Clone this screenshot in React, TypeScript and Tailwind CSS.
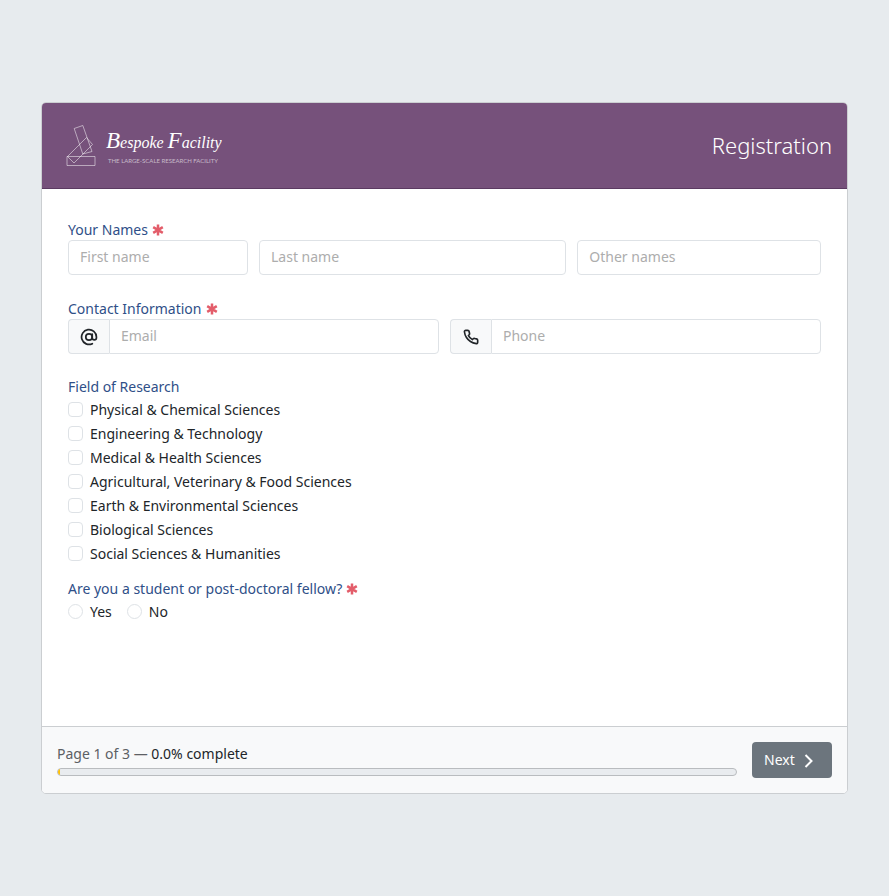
import type { ReactNode } from "react";

const fields = [
  "Physical & Chemical Sciences",
  "Engineering & Technology",
  "Medical & Health Sciences",
  "Agricultural, Veterinary & Food Sciences",
  "Earth & Environmental Sciences",
  "Biological Sciences",
  "Social Sciences & Humanities",
];

const inputClass =
  "h-[35px] w-full min-w-0 rounded border border-[#dee2e6] bg-white px-[11px] pb-[2px] text-[14px] text-[#212529] placeholder:text-[#adadad] outline-none";

function Required() {
  return (
    <svg viewBox="0 0 12 12" className="ml-1 inline-block size-3 align-[-1px]" aria-label="required" role="img">
      <path d="M6 .6v10.800M1.200 3.200l9.600 5.600M10.800 3.200L1.200 8.800" stroke="#e35d6a" strokeWidth="2.5" fill="none" />
    </svg>
  );
}

function Legend({ children }: { children: ReactNode }) {
  return <legend className="block h-5 leading-5 text-[#2f4f88]">{children}</legend>;
}

function Logo() {
  return (
    <svg viewBox="0 5 170 50" className="h-[50px] w-[170px]" role="img" aria-label="Bespoke Facility">
      <g fill="none" stroke="#fff" strokeOpacity=".5" strokeWidth="1">
        <path d="M10 40.500h28v9H10z" />
        <path d="M17.200 12.500l8.600-3 9.200 26-9.200 2.500z" />
        <path d="M10.500 40.500l19-19 6 7-18.500 18.500z" />
      </g>
      <text x="49" y="32" fill="#fff" fontFamily="Liberation Serif, serif" fontStyle="italic" fontSize="16">
        <tspan fontSize="23">B</tspan>
        <tspan>espoke </tspan>
        <tspan fontSize="23">F</tspan>
        <tspan>acility</tspan>
      </text>
      <text x="51" y="47" fill="#fff" fillOpacity=".6" fontFamily="Lato, sans-serif" fontSize="6">
        THE LARGE-SCALE RESEARCH FACILITY
      </text>
    </svg>
  );
}

export default function App() {
  return (
    <div className="flex min-h-screen items-center bg-[#e7ebee] px-[41px] font-['Noto_Sans',sans-serif] text-[14px] text-[#212529]">
      <form className="w-full overflow-hidden rounded-[5px] border border-[#cbced1] bg-white">
        <header className="flex h-[86px] items-center justify-between border-b border-[#5b3a61] bg-[#76517b] px-[15px]">
          <Logo />
          <h1 className="text-[22px] font-light text-white">Registration</h1>
        </header>

        <div className="flex min-h-[537px] flex-col px-[26px] pt-[31px]">
          <fieldset className="mb-6">
            <Legend>Your Names<Required /></Legend>
            <div className="grid grid-cols-12 gap-x-[11px]">
              <input className={`${inputClass} col-span-3`} placeholder="First name" aria-label="First name" />
              <input className={`${inputClass} col-span-5`} placeholder="Last name" aria-label="Last name" />
              <input className={`${inputClass} col-span-4`} placeholder="Other names" aria-label="Other names" />
            </div>
          </fieldset>

          <fieldset className="mb-[23px]">
            <Legend>Contact Information<Required /></Legend>
            <div className="grid grid-cols-2 gap-x-[11px]">
              <div className="flex">
                <span className="flex w-[41px] shrink-0 items-center justify-center rounded-l border border-r-0 border-[#dee2e6] bg-[#f8f9fa]">
                  <svg viewBox="0 0 24 24" className="size-[18px]" fill="none" stroke="#212529" strokeWidth="2.300" strokeLinecap="round">
                    <circle cx="12" cy="12" r="4.300" />
                    <path d="M16.300 8v5a2.800 2.800 0 0 0 5.600 0v-1a9.900 9.900 0 1 0-5.500 8.900" />
                  </svg>
                </span>
                <input type="email" className={`${inputClass} rounded-l-none`} placeholder="Email" aria-label="Email" />
              </div>
              <div className="flex">
                <span className="flex w-[41px] shrink-0 items-center justify-center rounded-l border border-r-0 border-[#dee2e6] bg-[#f8f9fa]">
                  <svg viewBox="0 0 24 24" className="size-4" fill="none" stroke="#212529" strokeWidth="2.500" strokeLinejoin="round">
                    <path d="M22 16.920v3a2 2 0 0 1-2.180 2 19.800 19.800 0 0 1-8.630-3.070 19.500 19.500 0 0 1-6-6 19.800 19.800 0 0 1-3.070-8.670A2 2 0 0 1 4.110 2h3a2 2 0 0 1 2 1.720c.13.960.36 1.900.7 2.810a2 2 0 0 1-.45 2.110L8.090 9.910a16 16 0 0 0 6 6l1.270-1.270a2 2 0 0 1 2.110-.45c.91.340 1.850.57 2.810.7A2 2 0 0 1 22 16.920z" />
                  </svg>
                </span>
                <input type="tel" className={`${inputClass} rounded-l-none`} placeholder="Phone" aria-label="Phone" />
              </div>
            </div>
          </fieldset>

          <fieldset className="mb-[14px]">
            <Legend>Field of Research</Legend>
            {fields.map((name) => (
              <label key={name} className="flex h-6 items-center gap-[7px]">
                <input type="checkbox" className="size-[15px] appearance-none rounded-[4px] border border-[#dee2e6] bg-white" />
                {name}
              </label>
            ))}
          </fieldset>

          <fieldset>
            <Legend>Are you a student or post-doctoral fellow?<Required /></Legend>
            <div className="flex gap-[15px]">
              {["Yes", "No"].map((answer) => (
                <label key={answer} className="flex h-6 items-center gap-[7px]">
                  <input type="radio" name="student" className="size-[15px] appearance-none rounded-full border border-[#dee2e6] bg-white" />
                  {answer}
                </label>
              ))}
            </div>
          </fieldset>
        </div>

        <footer className="flex items-start gap-[15px] border-t border-[#cbced1] bg-[#f8f9fa] p-[15px]">
          <div className="flex-1 pt-px">
            <p className="leading-[22px]">
              <span className="text-[#5c6064]">Page 1 of 3 — </span>0.0% complete
            </p>
            <div className="mt-[3px] h-2 overflow-hidden rounded-full border border-[#b9bcbf] bg-[#e9ecef]" role="progressbar" aria-label="Form completion" aria-valuenow={0}>
              <div className="h-full w-[2px] bg-[#ffc107]" />
            </div>
          </div>
          <button type="button" className="flex h-9 w-20 items-center rounded bg-[#6c757d] px-3 pb-[2px] text-white">
            Next
            <svg viewBox="0 0 10 14" className="mt-1 ml-[9px] h-[14px] w-[10px]" fill="none" stroke="#fff" strokeWidth="2">
              <path d="M1.500 1l6 6-6 6" />
            </svg>
          </button>
        </footer>
      </form>
    </div>
  );
}
